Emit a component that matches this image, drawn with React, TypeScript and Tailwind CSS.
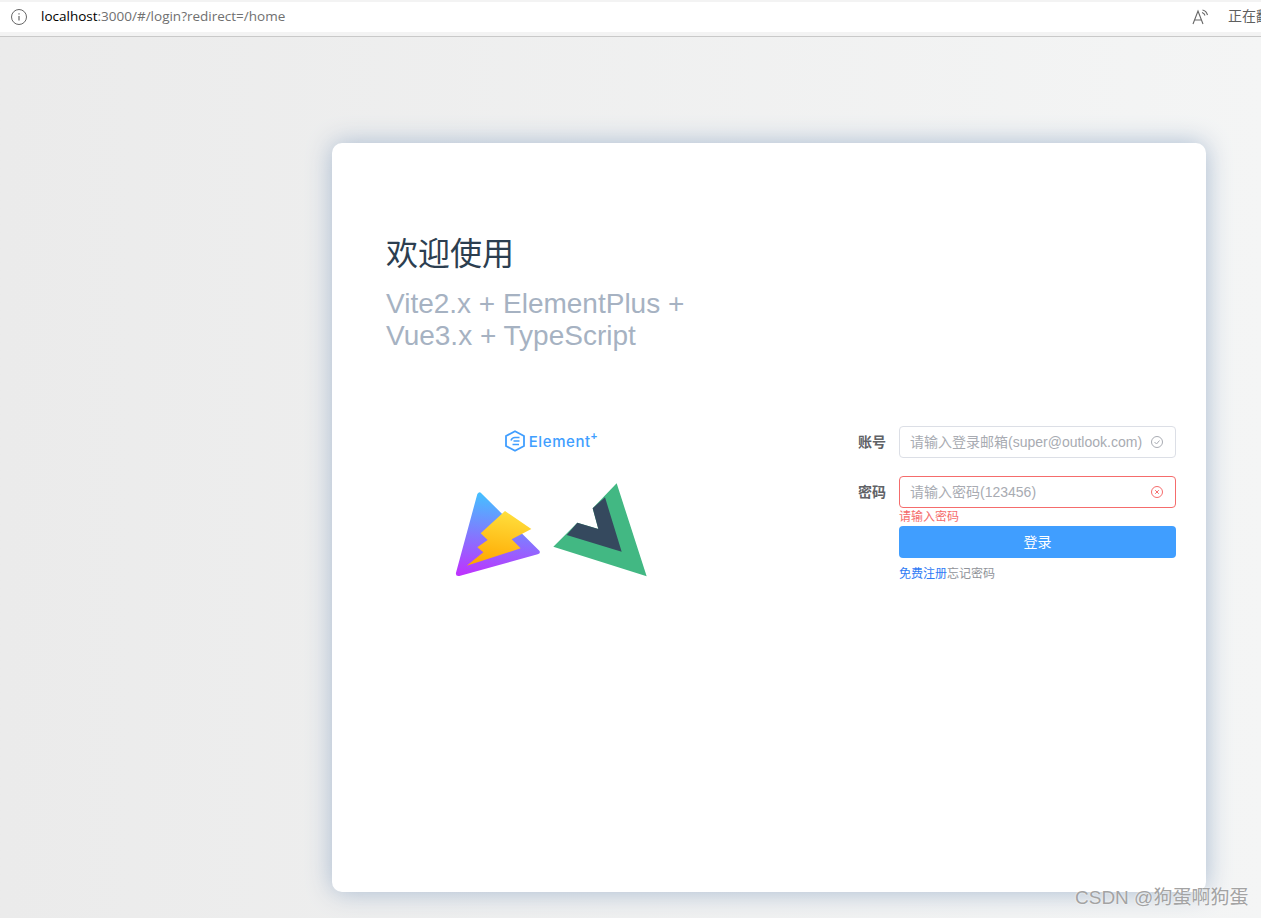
const cjk = "font-['Liberation_Sans','Noto_Sans_CJK_SC',sans-serif]";

function AddressBar() {
  return (
    <header className="h-[37px] border-b border-[#c9c9c9] bg-[#f3f3f3] pt-[2px] pb-[3px]">
      <div className="flex h-[30px] items-center overflow-hidden bg-white font-['Open_Sans','Noto_Sans_CJK_SC',sans-serif] text-[13.500px]">
        <svg className="ml-[11px] h-4 w-4 shrink-0" viewBox="0 0 16 16" fill="none" stroke="#666">
          <circle cx="8" cy="8" r="7.500" />
          <path d="M8 7v4.500M8 4.200v1.400" strokeWidth="1.200" />
        </svg>
        <p className="mb-[2px] ml-[14px] w-[1151px] shrink-0 text-[#707070]">
          <span className="text-black">localhost</span>:3000/#/login?redirect=/home
        </p>
        <svg className="h-[18px] w-[18px] shrink-0" viewBox="0 0 18 18" fill="none" stroke="#666" strokeWidth="1.100">
          <path d="M1 16 6 3l5 13M2.800 12h6.400" />
          <path d="M10 4.500c1.600.5 2.600 1.600 3 3M10.500 2c2.400.6 4.300 2.500 5 5" />
        </svg>
        <span className="mb-[2px] ml-[18px] shrink-0 whitespace-nowrap text-sm text-[#5f5f5f]">正在翻译</span>
      </div>
    </header>
  );
}

function ElementLogo() {
  return (
    <div className="ml-[2px] flex h-[22px] items-center justify-center text-[#409eff]">
      <svg className="h-[22px] w-[20px]" viewBox="0 0 20 22" fill="none" stroke="#409eff">
        <path d="M10 1.200 19 6v10l-9 4.800L1 16V6z" strokeWidth="1.800" />
        <path d="M14.500 7.500H10c-2.500 0-3.500 1.500-4 3M14.500 11H8.500M14 14.500H7.500" strokeWidth="1.600" />
      </svg>
      <span className="ml-[4px] font-['Inter',sans-serif] text-[15px] leading-none font-medium tracking-[0.6px]">Element</span>
      <span className="mb-[10px] text-[11px] leading-none font-bold">+</span>
    </div>
  );
}

function StackLogos() {
  return (
    <svg className="mt-[28px] h-[100px] w-[200px]" viewBox="30 180 600 300">
      <defs>
        <linearGradient id="viteBody" x1="0.45" y1="0" x2="0.35" y2="1">
          <stop offset="0" stopColor="#41c4ff" />
          <stop offset="1" stopColor="#bd34fe" />
        </linearGradient>
        <linearGradient id="viteBolt" x1="0.6" y1="0" x2="0.4" y2="1">
          <stop offset="0" stopColor="#ffdf3d" />
          <stop offset="1" stopColor="#ffa800" />
        </linearGradient>
      </defs>
      <path
        d="M112 222Q119 211 126 222L298 392Q303 400 293 403L58 468Q46 470 48 458Z"
        fill="url(#viteBody)"
      />
      <path
        d="M195 273 274 327 215 358 242 385 80 437 130 397 112 382 143 360 122 340Z"
        fill="url(#viteBolt)"
      />
      <path d="M530 190 620 469 340 380 412 308 475 327 458 265Z" fill="#42b883" />
      <path d="M495 232 545 395 380 345 412 308 475 327 458 265Z" fill="#35495e" />
    </svg>
  );
}

function StatusCheck() {
  return (
    <svg className="h-3 w-3 shrink-0" viewBox="0 0 12 12" fill="none" stroke="#a8abb2">
      <circle cx="6" cy="6" r="5.500" />
      <path d="m3.500 6 2 2 3-3.500" />
    </svg>
  );
}

function StatusError() {
  return (
    <svg className="h-3 w-3 shrink-0" viewBox="0 0 12 12" fill="none" stroke="#f56c6c">
      <circle cx="6" cy="6" r="5.500" />
      <path d="m4.200 4.200 3.600 3.600m0-3.600L4.200 7.800" />
    </svg>
  );
}

function FormRow({
  label,
  placeholder,
  error,
  children,
}: {
  label: string;
  placeholder: string;
  error?: boolean;
  children: React.ReactNode;
}) {
  return (
    <div className="flex h-8 items-center gap-[13px]">
      <label className="w-7 shrink-0 text-right text-sm font-bold text-[#606266]">{label}</label>
      <div
        className={`flex h-8 w-[277px] items-center justify-between rounded border pr-[12px] pl-[10px] ${
          error ? "border-[#f56c6c]" : "border-[#dcdfe6]"
        }`}
      >
        <span className="whitespace-nowrap text-sm text-[#a8abb2]">{placeholder}</span>
        {children}
      </div>
    </div>
  );
}

export default function App() {
  return (
    <div className={`h-[918px] w-[1261px] overflow-hidden ${cjk}`}>
      <AddressBar />
      <main className="relative h-[881px] bg-gradient-to-r from-[#ebebeb] to-[#f4f5f5] pt-[106px] pl-[332px]">
        <section className="h-[749px] w-[874px] rounded-[10px] bg-white px-[54px] pt-[89px] shadow-[0_0_26px_#a8bad0]">
          <h1 className="text-[32px] leading-[44px] text-[#2c3e50]">欢迎使用</h1>
          <p className="mt-[12px] text-[28px] leading-[32px] text-[#a6b2c2]">
            Vite2.x + ElementPlus +
            <br />
            Vue3.x + TypeScript
          </p>

          <div className="mt-[74px] flex">
            <div className="ml-[64px] flex w-[200px] flex-col items-center pt-[4px]">
              <ElementLogo />
              <StackLogos />
            </div>
            <div className="ml-[208px] w-[318px]">
              <FormRow label="账号" placeholder="请输入登录邮箱(super@outlook.com)">
                <StatusCheck />
              </FormRow>
              <div className="mt-[18px]">
                <FormRow label="密码" placeholder="请输入密码(123456)" error>
                  <StatusError />
                </FormRow>
              </div>
              <div className="pl-[41px]">
                <p className="pt-[1px] text-xs leading-[16px] text-[#f56c6c]">请输入密码</p>
                <button className="mt-[1px] h-8 w-[277px] rounded bg-[#409eff] pb-[1px] text-sm text-white">登录</button>
                <p className="mt-[8px] text-xs leading-[16px] text-[#909399]">
                  <span className="text-[#2f7bf5]">免费注册</span>忘记密码
                </p>
              </div>
            </div>
          </div>
        </section>
        <div className="absolute top-[847px] left-[1075px] text-[19px] leading-[28px] whitespace-nowrap text-[#a3a3a3] [text-shadow:0_0_2px_#fff]">
          CSDN @狗蛋啊狗蛋
        </div>
      </main>
    </div>
  );
}
